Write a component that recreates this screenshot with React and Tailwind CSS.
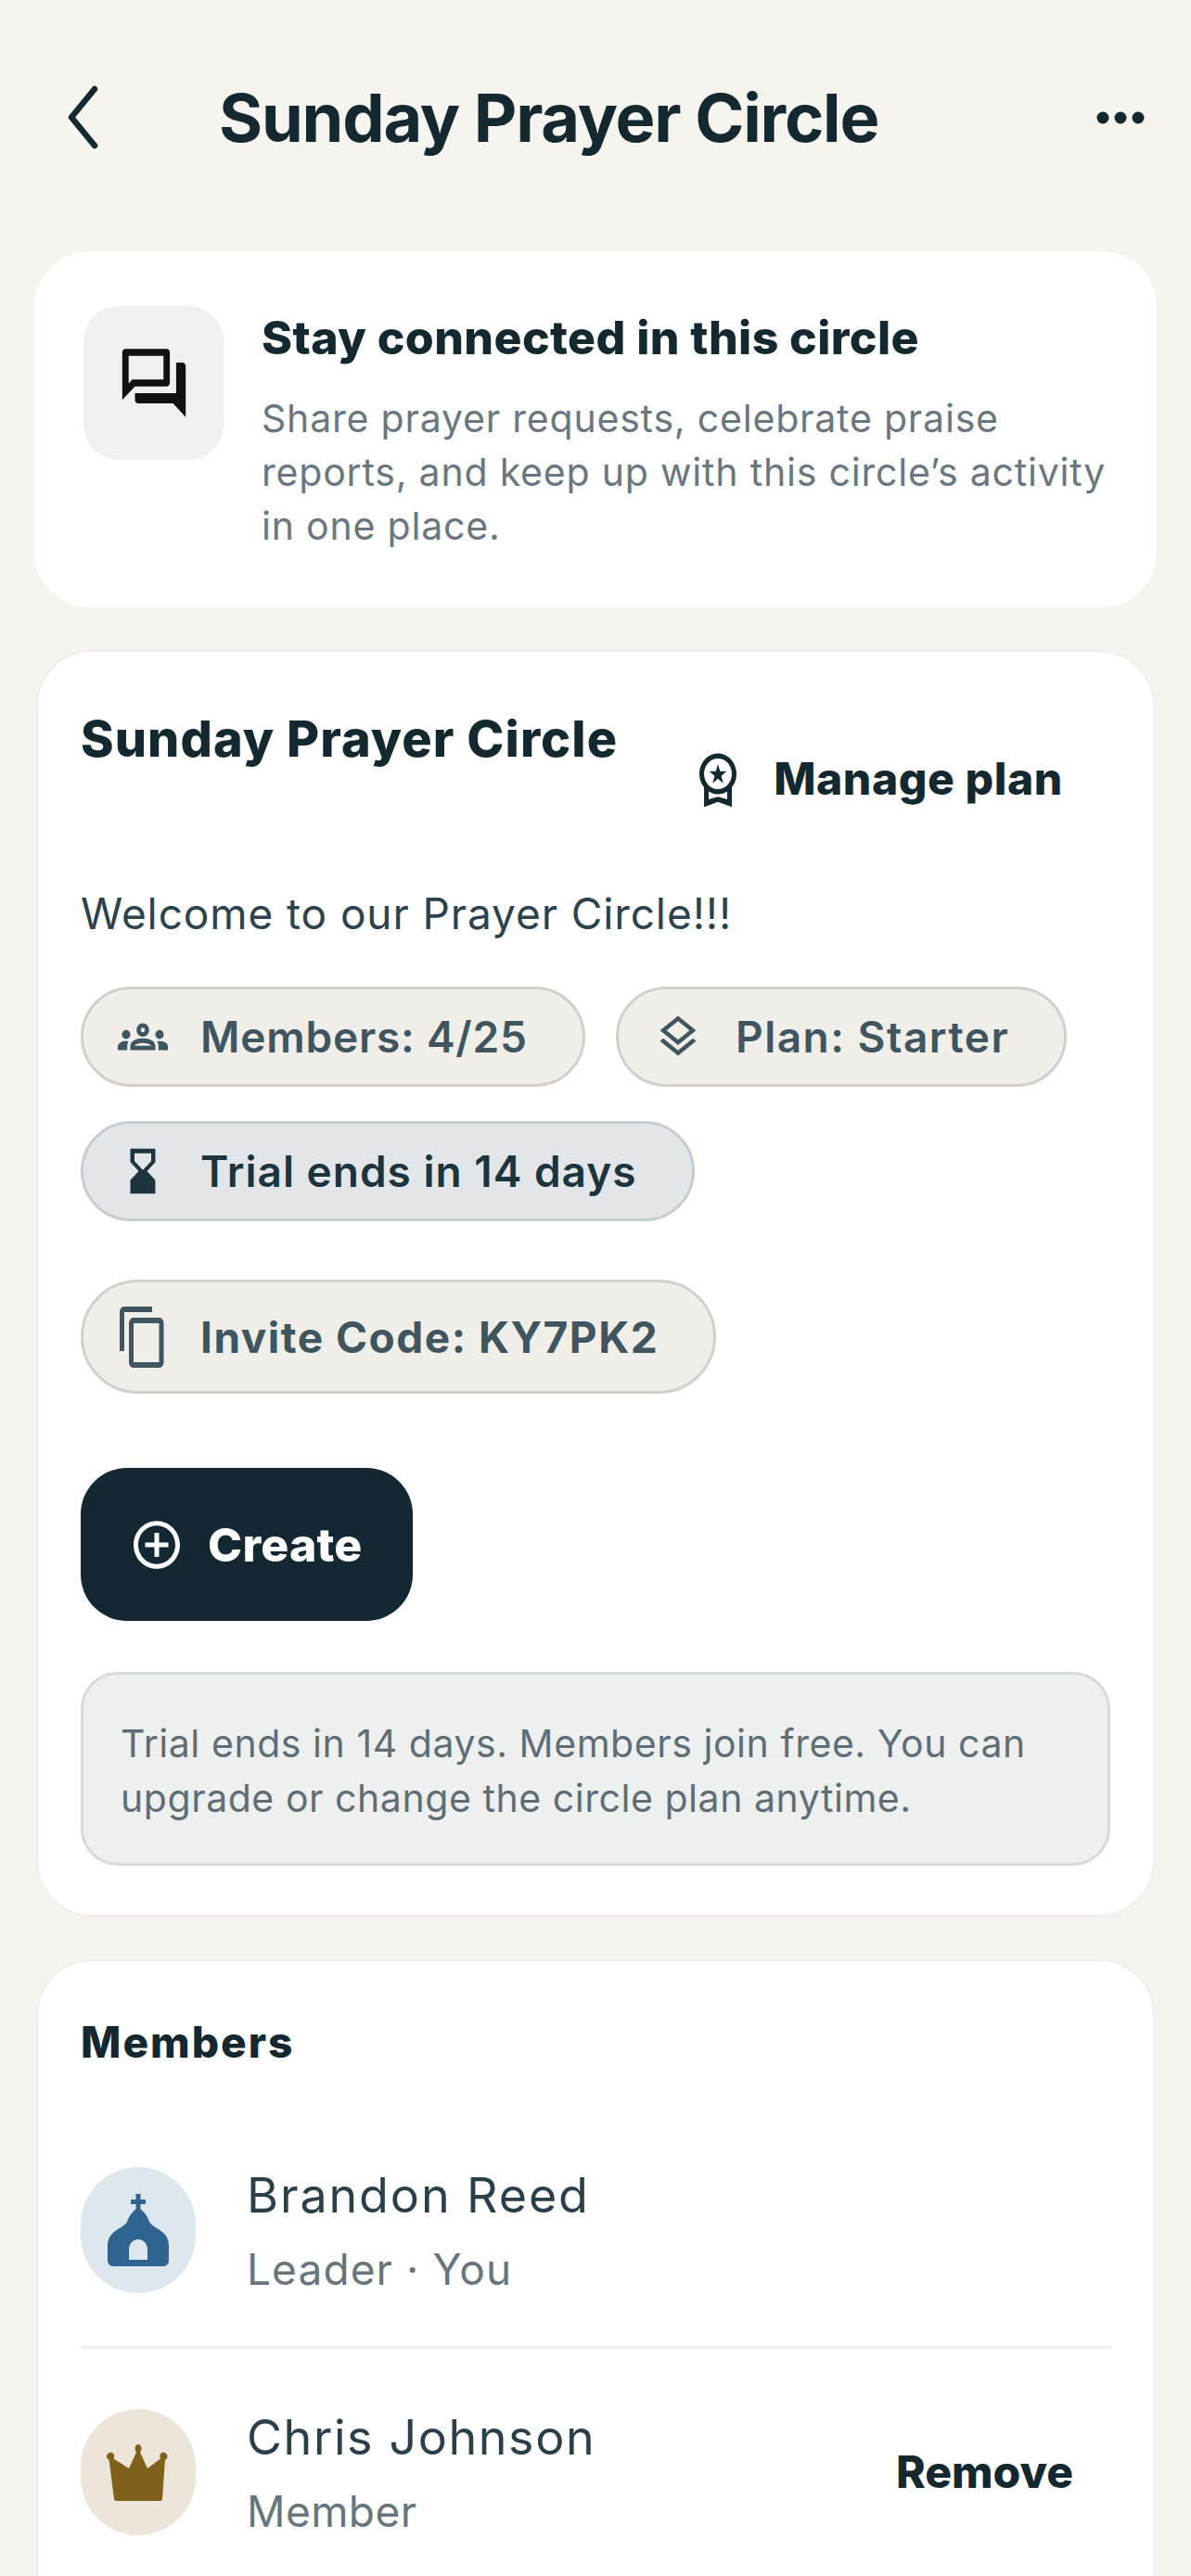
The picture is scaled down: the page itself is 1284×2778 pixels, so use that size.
import React from "react";
import { MdOutlineForum, MdOutlineGroups, MdOutlineLayers, MdHourglassBottom, MdContentCopy, MdAddCircleOutline, MdOutlineWorkspacePremium } from "react-icons/md";

function Pill({ icon, children, className }) {
  return (
    <div className={`flex items-center rounded-full border-[3px] ${className}`}>
      <div className="flex w-[126px] shrink-0 justify-center pl-[2px]">{icon}</div>
      <span>{children}</span>
    </div>
  );
}

function Church() {
  return (
    <svg viewBox="0 0 66 78" preserveAspectRatio="none" className="h-[78px] w-[66px]" fill="#2f6390">
      <path d="M30.500 0h5v6h5.500v5h-5.500v7h-5v-7H25V6h5.500z" />
      <path fillRule="evenodd" d="M33 15c6 3 10 9 12 15 2 4 8 6 14 11 5 4 7 9 7 15v15H0V56c0-6 2-11 7-15 6-5 12-7 14-11 2-6 6-12 12-15zM33 49c-6 0-10 5-10 11v11h20V60c0-6-4-11-10-11z" />
      <path d="M0 71h66v1c0 3-3 6-6 6H6c-3 0-6-3-6-6z" />
    </svg>
  );
}

function Crown() {
  return (
    <svg viewBox="0 0 72 61" preserveAspectRatio="none" className="h-[61px] w-[72px]" fill="#7f611b">
      <path d="M36 0c2.200 0 3.500 2.500 3.500 4.800 0 1.500-.7 2.700-1.500 3.600L46 26l14-10.500c-.5-.8-.7-1.700-.7-2.600 0-2.300 1.400-4.100 3.500-4.100 2.500 0 4.700 2 4.700 4.300 0 1.700-1 3.200-2.600 3.800L62 59c-.2 1.200-1 2-2 2H12c-1 0-1.800-.8-2-2L4.600 16.900C3 16.300 2 14.800 2 13.100c0-2.300 2.200-4.300 4.700-4.300 2.100 0 3.500 1.800 3.500 4.100 0 .9-.2 1.800-.7 2.600L26 26l8-17.600c-.8-.9-1.500-2.100-1.500-3.600C32.500 2.500 33.800 0 36 0z" />
    </svg>
  );
}

export default function App() {
  return (
    <div className="h-[2778px] w-[1284px] overflow-hidden bg-[#f5f4ef] font-['Inter',sans-serif] text-[#13282f]">
      <header className="flex h-[271px] items-start pt-[92px]">
        <svg viewBox="0 0 34 69" preserveAspectRatio="none" className="ml-[72px] h-[69px] w-[34px] shrink-0" fill="none" stroke="#13282f" strokeWidth="6.500" strokeLinecap="round" strokeLinejoin="round">
          <path d="M30 4 5 34.500 30 65" />
        </svg>
        <h1 className="ml-[130px] mt-[-5px] w-[711px] whitespace-nowrap text-[72px] font-bold leading-[80px] tracking-[-1.2px]">Sunday Prayer Circle</h1>
        <svg viewBox="0 0 52 14" className="ml-[235px] mt-[28px] h-[14px] w-[52px] shrink-0" fill="#13282f">
          <circle cx="7" cy="7" r="6.500" /><circle cx="26" cy="7" r="6.500" /><circle cx="45" cy="7" r="6.500" />
        </svg>
      </header>

      <section className="mx-[37px] flex h-[384px] rounded-[60px] bg-white pl-[53px] pt-[59px]">
        <div className="flex h-[166px] w-[151px] shrink-0 items-center justify-center rounded-[38px] bg-[#f1f0ec]">
          <MdOutlineForum preserveAspectRatio="none" className="h-[88px] w-[82px] text-[#111]" />
        </div>
        <div className="ml-[41px] mt-[-2px]">
          <h2 className="text-[50px] font-extrabold leading-[72px] tracking-[0.4px]">Stay connected in this circle</h2>
          <p className="mt-[22px] w-[930px] text-[41px] leading-[58px] tracking-[0.8px] text-[#6a7780]">Share prayer requests, celebrate praise reports, and keep up with this circle’s activity in one place.</p>
        </div>
      </section>

      <section className="mx-[39px] mt-[46px] h-[1366px] rounded-[60px] border-[2px] border-[#eeeeea] bg-white px-[46px]">
        <div className="flex h-[192px] items-start">
          <h2 className="mt-[54px] whitespace-nowrap text-[54px] font-extrabold leading-[80px] tracking-[1.05px]">Sunday Prayer Circle</h2>
          <div className="ml-[78px] mt-[104px] flex items-center">
            <MdOutlineWorkspacePremium preserveAspectRatio="none" className="h-[66px] w-[60px] text-[#13282f]" />
            <span className="ml-[30px] text-[48px] font-extrabold leading-[60px] tracking-[0.6px]">Manage plan</span>
          </div>
        </div>
        <p className="mt-[55px] text-[46px] leading-[70px] tracking-[0.9px] text-[#2c434e]">Welcome to our Prayer Circle!!!</p>

        <div className="mt-[44px] flex flex-wrap gap-x-[33px] gap-y-[37px] text-[46px] font-semibold leading-[60px] tracking-[0.8px] text-[#3f5560]">
          <Pill className="h-[108px] w-[544px] border-[#d0d1cb] bg-[#f0eee8]" icon={<MdOutlineGroups preserveAspectRatio="none" className="h-[58px] w-[54px]" />}>Members: 4/25</Pill>
          <Pill className="h-[108px] w-[486px] border-[#d0d1cb] bg-[#f0eee8] tracking-[1.5px]" icon={<MdOutlineLayers preserveAspectRatio="none" className="h-[54px] w-[52px]" />}>Plan: Starter</Pill>
          <Pill className="h-[108px] w-[662px] border-[#c6cdd1] bg-[#e3e6e8] tracking-[1px] text-[#1c343e]" icon={<MdHourglassBottom preserveAspectRatio="none" className="h-[58px] w-[54px]" />}>Trial ends in 14 days</Pill>
        </div>

        <Pill className="mt-[63px] h-[123px] w-[685px] border-[#d0d1cb] bg-[#f0eee8] text-[46px] font-bold leading-[60px] tracking-[1.5px] text-[#3f5560]" icon={<MdContentCopy preserveAspectRatio="none" className="h-[72px] w-[60px]" />}>Invite Code: KY7PK2</Pill>

        <button className="mt-[80px] flex h-[165px] w-[358px] items-center rounded-[50px] bg-[#132833] pl-[52px] text-[50px] font-extrabold leading-[60px] tracking-[0.2px] text-white">
          <MdAddCircleOutline preserveAspectRatio="none" className="h-[62px] w-[60px] shrink-0" />
          <span className="ml-[25px]">Create</span>
        </button>

        <div className="mt-[55px] h-[209px] w-[1110px] rounded-[40px] border-[3px] border-[#d6dad9] bg-[#eef0f0] px-[40px] pt-[45px] text-[41px] leading-[59px] tracking-[0.55px] text-[#5f6e76]">
          Trial ends in 14 days. Members join free. You can upgrade or change the circle plan anytime.
        </div>
      </section>

      <section className="mx-[39px] mt-[46px] h-[800px] rounded-t-[60px] border-[2px] border-[#eeeeea] bg-white px-[46px] pt-[52px]">
        <h2 className="text-[46px] font-extrabold leading-[70px] tracking-[2px]">Members</h2>
        <div className="mt-[100px] flex h-[196px] w-[1110px] items-start border-b-[3px] border-[#eef0ef]">
          <div className="flex h-[136px] w-[124px] shrink-0 items-center justify-center rounded-full bg-[#dde8ee]"><Church /></div>
          <div className="ml-[55px] mt-[-4px]">
            <div className="text-[52px] leading-[70px] tracking-[1.9px] text-[#2a3f4a]">Brandon Reed</div>
            <div className="mt-[9px] text-[46px] leading-[70px] tracking-[1.1px] text-[#67757d]">Leader · You</div>
          </div>
        </div>
        <div className="mt-[65px] flex w-[1110px] items-start">
          <div className="flex h-[136px] w-[124px] shrink-0 items-center justify-center rounded-full bg-[#ebe6d9]"><Crown /></div>
          <div className="ml-[55px] mt-[-4px] flex-1">
            <div className="text-[52px] leading-[70px] tracking-[1.6px] text-[#2a3f4a]">Chris Johnson</div>
            <div className="mt-[9px] text-[46px] leading-[70px] tracking-[0.4px] text-[#67757d]">Member</div>
          </div>
          <span className="mr-[40px] mt-[38px] text-[48px] font-extrabold leading-[60px] tracking-[0px]">Remove</span>
        </div>
      </section>
    </div>
  );
}
